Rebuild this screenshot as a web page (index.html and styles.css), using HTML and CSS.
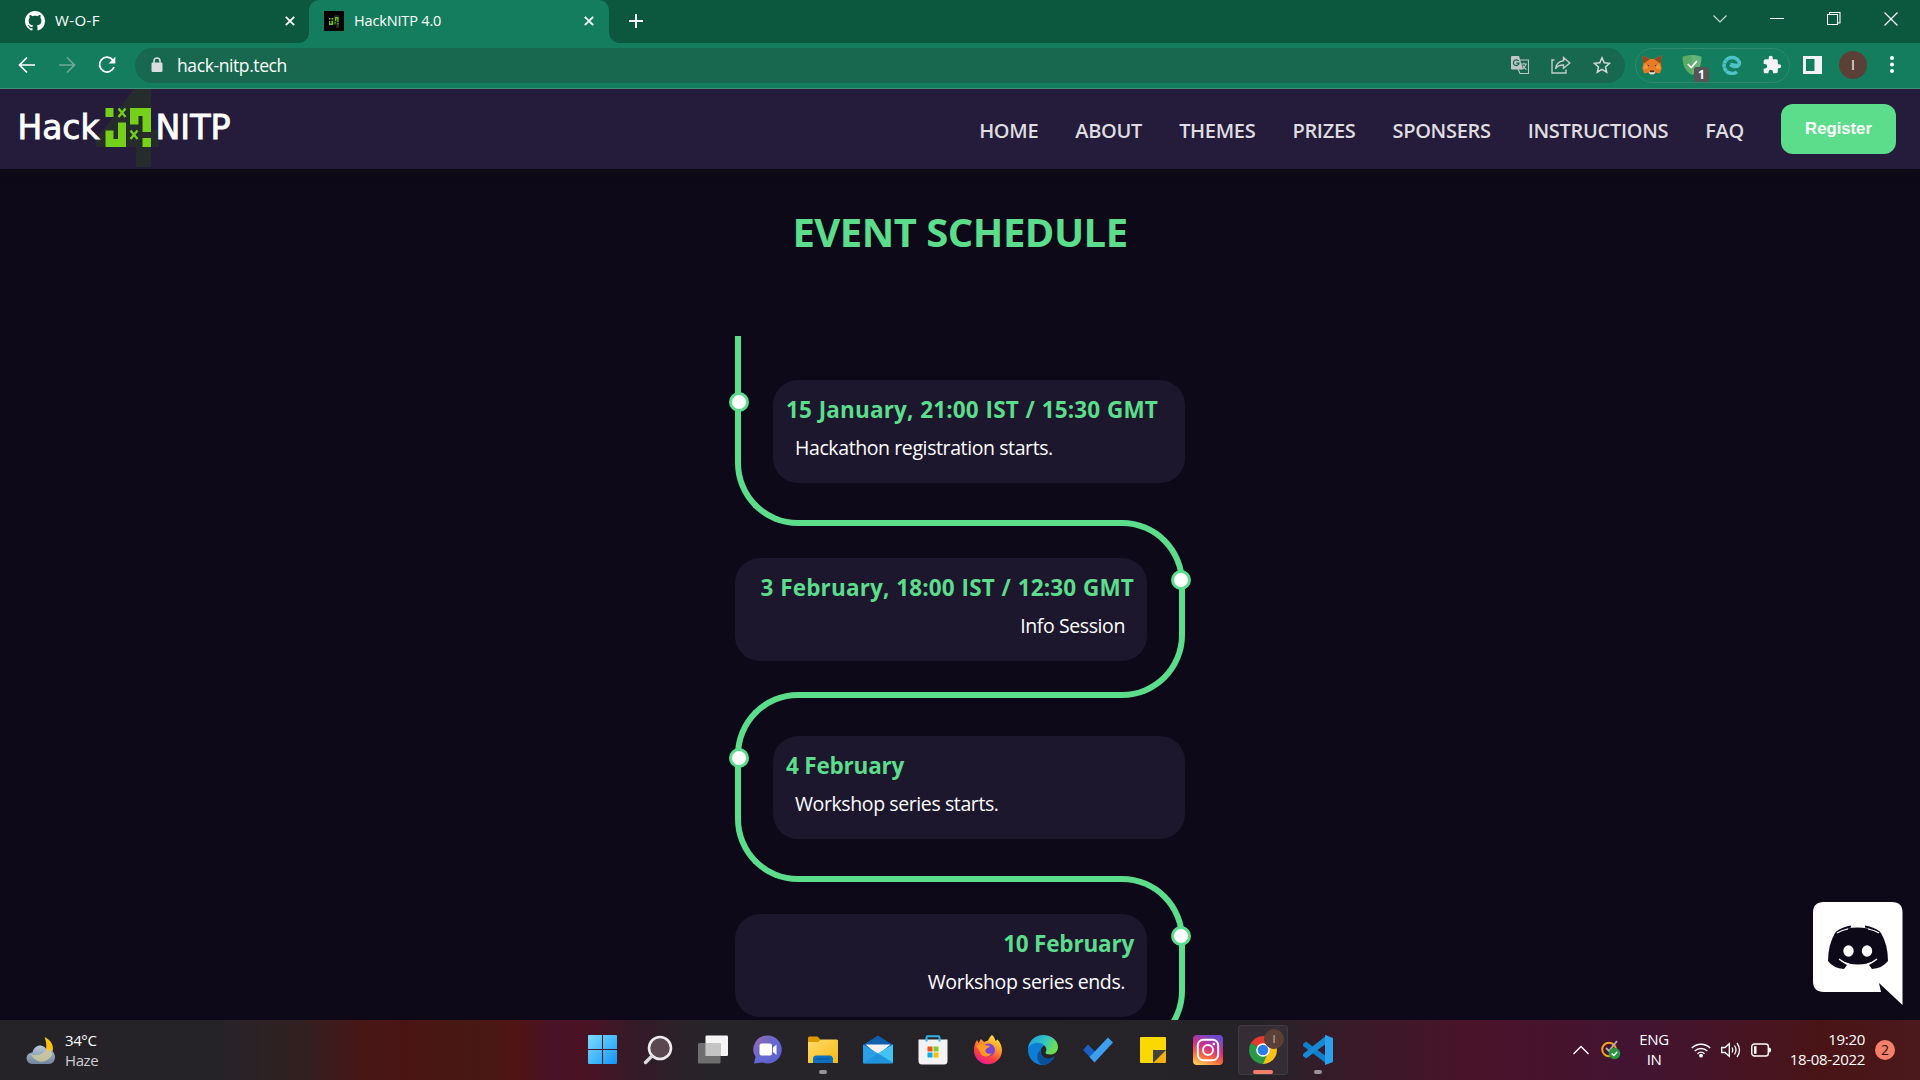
FILE: index.html
```html
<!DOCTYPE html>
<html lang="en">
<head>
<meta charset="utf-8">
<title>HackNITP 4.0</title>
<link rel="stylesheet" href="styles.css">
</head>
<body>
<div class="tabstrip">
  <div class="tab tab-idle">
    <svg class="favicon" width="20" height="20" viewBox="0 0 16 16"><path fill="#fff" d="M8 0C3.58 0 0 3.58 0 8c0 3.54 2.29 6.53 5.47 7.59.4.07.55-.17.55-.38 0-.19-.01-.82-.01-1.49-2.01.37-2.53-.49-2.69-.94-.09-.23-.48-.94-.82-1.13-.28-.15-.68-.52-.01-.53.63-.01 1.08.58 1.23.82.72 1.21 1.87.87 2.33.66.07-.52.28-.87.51-1.07-1.78-.2-3.64-.89-3.64-3.95 0-.87.31-1.59.82-2.15-.08-.2-.36-1.02.08-2.12 0 0 .67-.21 2.2.82.64-.18 1.32-.27 2-.27s1.36.09 2 .27c1.53-1.04 2.2-.82 2.2-.82.44 1.1.16 1.92.08 2.12.51.56.82 1.27.82 2.15 0 3.07-1.87 3.75-3.65 3.95.29.25.54.73.54 1.48 0 1.07-.01 1.93-.01 2.2 0 .21.15.46.55.38A8.01 8.01 0 0016 8c0-4.42-3.58-8-8-8z"/></svg>
    <span class="tab-title wide">W-O-F</span>
    <svg width="10" height="10" viewBox="0 0 10 10"><path d="M.8.8l8.4 8.4M9.2.8L.8 9.200" stroke="#fff" stroke-width="1.800"/></svg>
  </div>
  <div class="tab tab-active">
    <svg class="favicon" width="20" height="20" viewBox="0 0 20 20"><path fill="#000" d="M0 0h20v20H0z"/><path fill="#20281c" d="M11 4h4v13h-3v-3H5v-2z"/><path fill="#6cc518" d="M5 7h1.500v1.500H5zM7.500 7H9v1.500H7.500zM11 6h3.500v5h-1.200V7.500h-1V10H11zM5 10h1v2.500h1.500V10H9v4H5zM10.500 11h1.200v1.500h-1.200zM13.300 12h1.200v1.500h-1.200z"/></svg>
    <span class="tab-title">HackNITP 4.0</span>
    <svg width="10" height="10" viewBox="0 0 10 10"><path d="M.8.8l8.400 8.400M9.200.8L.8 9.200" stroke="#fff" stroke-width="1.800"/></svg>
  </div>
  <svg class="newtab" width="16" height="16" viewBox="0 0 16 16"><path d="M8 1v14M1 8h14" stroke="#fff" stroke-width="2"/></svg>
  <div class="window-buttons">
    <svg width="14" height="14" viewBox="0 0 14 14"><path d="M.5 3.500L7 10l6.500-6.500" fill="none" stroke="#cfe0d8" stroke-width="1.100"/></svg>
    <svg width="14" height="14" viewBox="0 0 14 14"><path d="M0 6.500h14" stroke="#fff"/></svg>
    <svg width="14" height="14" viewBox="0 0 14 14"><path d="M.5 2.500h10v10H.5zM2.500 2.500V.5h10.500v10.500h-2.500" fill="none" stroke="#fff" stroke-width="1.100"/></svg>
    <svg width="14" height="14" viewBox="0 0 14 14"><path d="M.5.5l13 13M13.500.5l-13 13" stroke="#fff" stroke-width="1.200"/></svg>
  </div>
</div>

<div class="toolbar">
  <div class="nav-buttons">
    <svg width="18" height="18" viewBox="0 0 18 18"><path d="M17 9H2M9 1.500L1.500 9 9 16.500" fill="none" stroke="#fff" stroke-width="1.700"/></svg>
    <svg width="18" height="18" viewBox="0 0 18 18"><path d="M1 9h15M9 1.500L16.500 9 9 16.500" fill="none" stroke="#70aa96" stroke-width="1.700"/></svg>
    <svg width="18" height="18" viewBox="0 0 18 18"><path d="M14.800 4A7.400 7.400 0 1 0 16 11" fill="none" stroke="#fff" stroke-width="1.800"/><path fill="#fff" d="M17.300.8v6.700h-6.700z"/></svg>
  </div>
  <div class="omnibox">
    <svg width="12" height="16" viewBox="0 0 12 16"><rect x=".5" y="5.500" width="11" height="9.500" rx="1.300" fill="#dadde0"/><path d="M3 6V4a3 3 0 0 1 6 0v2" fill="none" stroke="#dadde0" stroke-width="1.500"/></svg>
    <span class="url">hack-nitp.tech</span>
    <div class="omnibox-actions">
      <svg width="18" height="18" viewBox="0 0 18 18"><path fill="none" stroke="#bfc6c3" stroke-width="1.100" d="M8 4h9.500v13.500H9L7 13"/><path fill="#bfc6c3" d="M1 0h7l4 13.500H1a1 1 0 0 1-1-1V1a1 1 0 0 1 1-1z"/><path d="M7.600 5.200A2.800 2.800 0 1 0 8 7.200H5.300" fill="none" stroke="#17684f" stroke-width="1.300"/><path d="M10 8h6M13 6.700V8M15 8c-.5 2.500-2.200 4-3.500 5M11.700 9.500c.8 1.700 2.300 3 3.700 4" fill="none" stroke="#bfc6c3" stroke-width="1.100"/></svg>
      <svg width="20" height="18" viewBox="0 0 20 18"><path d="M3.500 4H1v13h14v-3.500" fill="none" stroke="#c4cbc8" stroke-width="1.400"/><path d="M12.500 1.500L18.800 7l-6.300 5.300V9C8.500 9 6 10.200 4.500 12.800 5 8.500 7.500 5.300 12.500 4.700z" fill="none" stroke="#c4cbc8" stroke-width="1.400"/></svg>
      <svg width="18" height="18" viewBox="0 0 18 18"><path d="M9 1.800l2.200 5 5.400.5-4.100 3.600 1.200 5.300L9 13.400l-4.700 2.800 1.200-5.300-4.100-3.600 5.400-.5z" fill="none" stroke="#d5dad8" stroke-width="1.500"/></svg>
    </div>
  </div>
  <div class="extensions">
    <svg width="20" height="20" viewBox="0 0 20 20"><path fill="#e87b25" d="M.5.5L8 4h4L19.500.5l-.8 8 1 5-2 5-4-1-1.700 1.800H8L6.300 17.500l-4 1-2-5 1-5z"/><path fill="#93481f" d="M.5.5L8 4 3 7.500l-1.700 1zM19.500.5L12 4l5 3.500 1.700 1z"/><path fill="#f79a38" d="M7 10.500l-1.500 3-4 .5 1.500-5zM13 10.500l1.500 3 4 .5-1.500-5z"/><path fill="#332b2b" d="M5 9.500l2.500 1-1 1zM15 9.500l-2.500 1 1 1zM8 15.500h4v2H8z"/><path fill="#ddd" d="M6.500 16.500l1.500.8h4l1.500-.8L12 19.300H8z"/></svg>
    <div class="shield">
      <svg width="20" height="20" viewBox="0 0 20 20"><path fill="#67b279" d="M10 0c3 0 6.500.6 9.500 1.700 0 7-1.500 13.600-9.500 18.300z"/><path fill="#5bab66" d="M10 0C7 0 3.500.6.5 1.700.5 8.700 2 15.300 10 20z"/><path d="M5.800 9l3.400 3.500L15 6" fill="none" stroke="#fff" stroke-width="1.700"/></svg>
      <span class="badge">1</span>
    </div>
    <svg width="20" height="20" viewBox="0 0 20 20"><path d="M15 16.800A8 8 0 1 1 17.300 7c.5 2.800-1.300 4.300-4 4.300-2 0-3.800-.5-5-1.600" fill="none" stroke="#4dc3c8" stroke-width="3.600"/><path fill="#4dc3c8" d="M8 7.500L18 9.500l-2 3.500-5 .2z"/><path d="M2 4l3 2M.8 8l3 .8M1 12.500l3-.5M3.500 16.500L6 14.300" stroke="#2d9a90" stroke-width=".8"/></svg>
    <svg width="20" height="20" viewBox="0 0 24 24"><path fill="#f1f3f4" d="M20.500 11H19V7a2 2 0 0 0-2-2h-4V3.500a2.500 2.500 0 0 0-5 0V5H4a2 2 0 0 0-2 2v3.800h1.500a2.700 2.700 0 0 1 0 5.400H2V20a2 2 0 0 0 2 2h3.800v-1.500a2.700 2.700 0 0 1 5.400 0V22H17a2 2 0 0 0 2-2v-4h1.500a2.500 2.500 0 0 0 0-5z"/></svg>
  </div>
  <svg class="panel-icon" width="19" height="18" viewBox="0 0 19 18"><path fill="#f1f3f4" d="M0 0h19v18H0z"/><path fill="#147d5d" d="M3 3h8.500v12H3z"/></svg>
  <span class="avatar">I</span>
  <svg class="menu-icon" width="4" height="17" viewBox="0 0 4 17"><circle cx="2" cy="2" r="2" fill="#fff"/><circle cx="2" cy="8.500" r="2" fill="#fff"/><circle cx="2" cy="15" r="2" fill="#fff"/></svg>
</div>

<div class="page">
  <header class="site-header">
    <svg class="logo" width="240" height="79" viewBox="0 0 240 79">
      <path fill="#262b2c" d="M134 0h17v41h8v17h-8v20h-15V58H96V51z"/>
      <g fill="#74d018"><path d="M105.500 19h8v9h-8zM130 19h21v24h-8.500V27h-4v8.500H130zM118 33.500h8V58h-20.500V41.500h8V50h4.500zM142.500 49h8.500v9h-8.500z"/></g>
      <path d="M118.500 19.500l7 8.500M125.500 19.500l-7 8.500M130.500 41.500l7 8.500M137.500 41.500l-7 8.500" stroke="#74d018" stroke-width="2.300"/>
      <g class="logo-text"><text x="17.500" y="49.500" textLength="82" lengthAdjust="spacingAndGlyphs">Hack</text><text x="155.500" y="49.500" textLength="75" lengthAdjust="spacingAndGlyphs">NITP</text></g>
    </svg>
    <nav class="site-nav">
      <a>HOME</a><a>ABOUT</a><a>THEMES</a><a>PRIZES</a><a>SPONSERS</a><a>INSTRUCTIONS</a><a>FAQ</a>
      <button class="register">Register</button>
    </nav>
  </header>
  <main class="schedule">
    <h1>EVENT SCHEDULE</h1>
    <div class="timeline">
      <section class="item left first"><i class="rail"></i><b class="dot"></b><div class="card"><h2 class="spaced">15 January, 21:00 IST / 15:30 GMT</h2><p>Hackathon registration starts.</p></div></section>
      <section class="item right"><i class="rail"></i><b class="dot"></b><div class="card"><h2 class="spaced">3 February, 18:00 IST / 12:30 GMT</h2><p>Info Session</p></div></section>
      <section class="item left"><i class="rail"></i><b class="dot"></b><div class="card"><h2>4 February</h2><p>Workshop series starts.</p></div></section>
      <section class="item right"><i class="rail"></i><b class="dot"></b><div class="card"><h2>10 February</h2><p>Workshop series ends.</p></div></section>
    </div>
  </main>
  <svg class="discord" width="90" height="104" viewBox="0 0 90 104">
    <path fill="#fff" d="M11 0h68q10.500 0 10.500 10.500V103L66 81l2 9H11Q0 90 0 79V10.500Q0 0 11 0z"/>
    <path fill="#0e0919" d="M22 31q4-4 12-4.500 10-2 21 0 8 .5 13 4.500 7 12 7 28-6 7.500-16 8l-3-4 8-5q-19 9-38 0l8 5-3 4q-11-1-16-8 0-16 7-28z"/>
    <path d="M23 31q6-5 15-6.500M67 31q-6-5-15-6.500" fill="none" stroke="#0e0919" stroke-width="1.800"/>
    <path d="M24 31q5-3 11-4M66 31q-5-3-11-4M26 57q5 4 10 5M64 57q-5 4-10 5" fill="none" stroke="#fff" stroke-width="1.200"/>
    <ellipse cx="35.500" cy="49" rx="5.200" ry="5.800" fill="#fff"/><ellipse cx="54" cy="49" rx="5.200" ry="5.800" fill="#fff"/>
  </svg>
</div>

<footer class="taskbar">
  <div class="weather">
    <svg width="30" height="30" viewBox="0 0 30 30"><defs><linearGradient id="cl" x2="0" y2="1"><stop stop-color="#b9c9dc"/><stop offset="1" stop-color="#71859c"/></linearGradient></defs><path fill="#ffc20e" d="M18.500 1c9 4 10.500 12 6 20h-7c3-5 4-13 1-20z"/><path fill="url(#cl)" d="M6 28a5.600 5.600 0 0 1 .5-11.500C7.500 11 12 9 15 9.500c3 .5 5 2.500 6 5 5-1 8 2.500 8 6.500 0 4-2.500 7-6 7z"/><path fill="#d2cc9a" opacity=".8" d="M5 18c5 3 12 0 15-4 4-.5 6 2 6 5-4 8-16 10-21-1z"/></svg>
    <div class="two-lines"><span>34°C</span><span class="dim">Haze</span></div>
  </div>
  <div class="apps">
    <span class="app"><svg width="30" height="30" viewBox="0 0 30 30"><defs><linearGradient id="win" x2="1" y2="1"><stop stop-color="#7fdcff"/><stop offset="1" stop-color="#1196f5"/></linearGradient></defs><path fill="url(#win)" d="M0 1q0-1 1-1h13v14H0zM15 0h13q1 0 1 1v13H15zM0 15h14v14H1q-1 0-1-1zM15 15h14v13q0 1-1 1H15z"/></svg></span>
    <span class="app"><svg width="30" height="30" viewBox="0 0 30 30"><circle cx="17" cy="13" r="11" fill="#5b4750" stroke="#eceaea" stroke-width="2.600"/><path d="M9 21l-6.500 6.500" stroke="#dcdada" stroke-width="3.400" stroke-linecap="round"/></svg></span>
    <span class="app"><svg width="30" height="30" viewBox="0 0 30 30"><rect x="7.500" y=".5" width="22.500" height="20.500" rx="1.200" fill="#f4f4f4"/><rect x="0" y="8" width="22.500" height="20.500" rx="1.200" fill="#7b7b7b" opacity=".85"/><path fill="#c4c4c4" d="M7.500 8h15v13h-15z"/></svg></span>
    <span class="app"><svg width="30" height="30" viewBox="0 0 30 30"><defs><linearGradient id="chat" x2="1" y2="1"><stop stop-color="#9a69ae"/><stop offset=".5" stop-color="#6468d0"/><stop offset="1" stop-color="#5a5ed0"/></linearGradient></defs><path fill="url(#chat)" d="M14.500.5a14 14 0 1 1-5 27L1 28.500 2.500 22a14 14 0 0 1 12-21.500z"/><rect x="6.500" y="8.500" width="12.500" height="12" rx="2" fill="#fff"/><path fill="#fff" d="M20 12.500l3.500-3v10.500l-3.500-3z"/></svg></span>
    <span class="app open"><svg width="30" height="30" viewBox="0 0 30 30"><defs><linearGradient id="fo" x2="1" y2="1"><stop stop-color="#ffdc69"/><stop offset="1" stop-color="#f9b916"/></linearGradient></defs><path fill="#dd9900" d="M0 3q0-1.500 1.500-1.500h8L13 5h17v5H0z"/><path fill="url(#fo)" d="M0 7h10l3-2.500h15.500Q30 4.500 30 6v22H0z"/><path fill="#0d6fc0" d="M5 28v-4q0-3.500 3.500-3.500h13Q25 20.500 25 24v4z"/><path d="M8.500 24h13" stroke="#0a4e90" stroke-width="1"/></svg></span>
    <span class="app"><svg width="30" height="30" viewBox="0 0 30 30"><path fill="#0e5fae" d="M0 10L15 .5 30 10v5H0z"/><path fill="#f2f2f2" d="M2.500 9.500h25L15 20z"/><path fill="#2a9fe5" d="M0 9.500L15 18.500 30 9.500V27.500q0 1-1 1H1q-1 0-1-1z"/><path fill="#42c3f2" d="M30 9.500V27.500L15 18.500z"/><path fill="#1e8ddc" d="M0 28.500L30 28 15 18.500z" opacity=".7"/></svg></span>
    <span class="app"><svg width="30" height="30" viewBox="0 0 30 30"><path d="M8.500 6V2.500q0-1.200 1.200-1.200h10.600q1.200 0 1.200 1.200V6" fill="none" stroke="#2fb4ea" stroke-width="2"/><path fill="#f3f3f3" d="M.5 4.500h29V26q0 3.500-3.500 3.500H4Q.5 29.500.5 26z"/><path d="M8.500 6.500V4M21.500 6.500V4" stroke="#2fb4ea" stroke-width="2"/><path fill="#f1511b" d="M9.500 11.500h5v5h-5z"/><path fill="#80cc28" d="M15.500 11.500h5v5h-5z"/><path fill="#00adef" d="M9.500 17.500h5v5h-5z"/><path fill="#fbbc09" d="M15.500 17.500h5v5h-5z"/></svg></span>
    <span class="app"><svg width="30" height="30" viewBox="0 0 30 30"><defs><linearGradient id="ff" x1=".8" y1="0" x2=".3" y2="1"><stop stop-color="#fff04a"/><stop offset=".35" stop-color="#ffa22a"/><stop offset=".7" stop-color="#ff4040"/><stop offset="1" stop-color="#e6189b"/></linearGradient></defs><path fill="url(#ff)" d="M19 0c2 1.500 3 4 3.500 6l2-1.500c3 3 4.500 7 4.500 11A14 14 0 1 1 1 15c0-4 1-7 3-10l1.500 3 2.500-4 3 3 4-1.500C16 3.500 17 1.500 19 0z"/><circle cx="15.500" cy="15" r="6.500" fill="#7b43d6"/><path fill="#ff9c25" d="M3 11c4-2 6-2 8-1l6 1c-1 2-4 2-4.500 4.500-.5 2 2.500 4 6 3-2 4-9 4-11 0-1.500-3-2-6-4.500-7.500z"/></svg></span>
    <span class="app"><svg width="30" height="30" viewBox="0 0 30 30"><defs><linearGradient id="eg" x2="1" y2=".4"><stop stop-color="#1b9ae0"/><stop offset=".6" stop-color="#35c4c0"/><stop offset="1" stop-color="#6de04e"/></linearGradient></defs><path fill="#0b7fd6" d="M0 15C0 7 5 3 11 4l7 6c-4 1-6 4-5 8 1 5 6 7 12 6-3 4-7 6-11 6C6 29.500 0 23 0 15z"/><path fill="#0d4f98" d="M12.500 15c-1 5 3 9 8 8.500 3-.3 5-1.500 6.500-2.500-2 5.500-7 9-12 9-6-2-8-11-2.500-15z"/><path fill="url(#eg)" d="M.2 13C1.500 5 7.500 0 15 0c9 0 15 6 15 12 0 5-4 7.500-8 7.500-3 0-5-1-4.500-2 1.500-2 1-5.500-1.500-7.500C11 6 3 8 .2 13z"/></svg></span>
    <span class="app"><svg width="30" height="30" viewBox="0 0 30 30"><path fill="#1c5fc4" d="M0 15l5-5.500 12 12-5.500 5.500z"/><path fill="#3d9fee" d="M6.500 22L25 2.500l5 5L11.500 27.500z"/></svg></span>
    <span class="app"><svg width="30" height="30" viewBox="0 0 30 30"><path fill="#fbd800" d="M2 3q0-1 1-1h24q1 0 1 1v12H15v13H3q-1 0-1-1z"/><path fill="#45423c" d="M15 15h13L15 28z"/><path fill="#f3b010" d="M28 15v12q0 1-1 1H15z"/></svg></span>
    <span class="app"><svg width="30" height="30" viewBox="0 0 30 30"><defs><linearGradient id="ig" x1=".2" y1="1" x2=".6" y2="0"><stop stop-color="#ffcf5c"/><stop offset=".3" stop-color="#fa6a3c"/><stop offset=".6" stop-color="#d62d84"/><stop offset="1" stop-color="#6b4bcf"/></linearGradient></defs><rect width="30" height="30" rx="4" fill="url(#ig)"/><rect x="4.800" y="4.800" width="20.400" height="20.400" rx="5.500" fill="none" stroke="#fff" stroke-width="2"/><circle cx="15" cy="15" r="5" fill="none" stroke="#fff" stroke-width="2"/><circle cx="20.800" cy="9" r="1.300" fill="#fff"/></svg></span>
    <span class="app current"><svg width="30" height="30" viewBox="0 0 30 30"><path fill="#e33b2e" d="M15 15L2.900 8A14 14 0 0 1 27.100 8z"/><path fill="#fbc116" d="M15 15l12.100-7A14 14 0 0 1 15 29z"/><path fill="#2a9a49" d="M15 15v0l5 3-5 11A14 14 0 0 1 2.900 8z"/><circle cx="15" cy="15" r="6.800" fill="#fff"/><circle cx="15" cy="15" r="5.300" fill="#2b7de9"/></svg><span class="app-badge">I</span></span>
    <span class="app open"><svg width="30" height="30" viewBox="0 0 30 30"><path fill="#0f7fc9" d="M0 9l3-2.500L24 22v7L0 11z"/><path fill="#1788d4" d="M0 21l3 2.500L24 8V0L0 19z"/><path fill="#2ba1ee" d="M22 0l8 3v24l-8 3z"/></svg></span>
  </div>
  <div class="tray">
    <svg width="16" height="10" viewBox="0 0 16 10"><path d="M.5 9L8 1.500 15.500 9" fill="none" stroke="#fff" stroke-width="1.300"/></svg>
    <svg class="av" width="20" height="20" viewBox="0 0 20 20"><circle cx="8" cy="9.500" r="6.800" fill="none" stroke="#eda51f" stroke-width="2"/><path d="M5 8l3 3L16 1" fill="none" stroke="#b9a8a8" stroke-width="2"/><circle cx="13.500" cy="13.500" r="5.800" fill="#27963c"/><path d="M10.700 13.500l2.200 2 3.400-3.800" fill="none" stroke="#fff" stroke-width="1.500"/></svg>
    <div class="two-lines lang"><span>ENG</span><span>IN</span></div>
    <svg class="wifi" width="20" height="16" viewBox="0 0 20 16"><path d="M.8 6a13 13 0 0 1 18.400 0M3.700 9a9 9 0 0 1 12.600 0M6.500 11.700a5 5 0 0 1 7 0" fill="none" stroke="#fff" stroke-width="1.400"/><circle cx="10" cy="13.700" r="1.900" fill="#fff"/></svg>
    <svg class="sound" width="20" height="18" viewBox="0 0 20 18"><path d="M.7 6.500H4L8.300 2.700v12.600L4 11.500H.7zM11 6.500q1.500 2.500 0 5M13.500 4.500q3 4.500 0 9M16 2q5 7 0 14" fill="none" stroke="#fff" stroke-width="1.300"/></svg>
    <svg class="battery" width="21" height="14" viewBox="0 0 21 14"><rect x=".8" y="1" width="16.500" height="12" rx="2.500" fill="none" stroke="#fff" stroke-width="1.400"/><path fill="#fff" d="M3 3.300h2.500v7.400H3zM18 4.500q2.200 0 2.200 2.500T18 9.500z"/></svg>
    <div class="two-lines clock"><span>19:20</span><span>18-08-2022</span></div>
    <span class="count">2</span>
  </div>
</footer>
</body>
</html>
```
FILE: styles.css
```css
* { box-sizing: border-box; margin: 0; padding: 0; }
body { width: 1920px; height: 1080px; overflow: hidden; display: flex; flex-direction: column; background: #0e0919; font-family: "Open Sans", "Noto Sans", sans-serif; color: #fff; }
svg { display: block; flex: none; }

/* Browser tabs */
.tabstrip { height: 43px; flex: none; display: flex; align-items: flex-start; background: #0b583f; }
.tab { height: 43px; display: flex; align-items: center; padding-bottom: 1px; }
.tab-idle { width: 309px; padding-left: 25px; padding-right: 14px; }
.tab-active { width: 300px; padding-left: 15px; padding-right: 15px; background: #147d5d; border-radius: 10px 10px 0 0; position: relative; }
.tab-active::before, .tab-active::after { content: ""; position: absolute; bottom: 0; width: 10px; height: 10px; }
.tab-active::before { left: -10px; background: radial-gradient(circle at 0 0, transparent 9.500px, #147d5d 10px); }
.tab-active::after { right: -10px; background: radial-gradient(circle at 100% 0, transparent 9.500px, #147d5d 10px); }
.tab-title { flex: 1; margin-left: 10px; padding-bottom: 2px; font-size: 14.500px; letter-spacing: -0.160px; }
.tab-title.wide { font-size: 15px; letter-spacing: 0.400px; }
.newtab { margin: 13px 0 0 19px; }
.window-buttons { margin: 12px 22px 0 auto; display: flex; gap: 43px; }

/* Address bar */
.toolbar { height: 46px; flex: none; display: flex; align-items: center; background: #147d5d; border-bottom: 1px solid #3f9079; padding-bottom: 2px; }
.nav-buttons { width: 135px; padding-left: 18px; display: flex; gap: 22px; }
.omnibox { width: 1490px; height: 35px; border-radius: 18px; margin-top: 1px; background: #17684f; display: flex; align-items: center; padding: 0 14px 0 16px; }
.url { margin-left: 14px; font-size: 17.500px; letter-spacing: -0.400px; line-height: 24px; }
.omnibox-actions { margin-left: auto; display: flex; gap: 22px; }
.extensions { width: 155px; height: 35px; margin: 1px 0 0 10px; border: 1px solid #31896c; border-radius: 18px; display: flex; align-items: center; gap: 20px; padding-left: 6px; }
.shield { position: relative; }
.badge { position: absolute; left: 12px; top: 12px; width: 15px; height: 15px; border-radius: 2px; background: #555; font-weight: 700; font-size: 12px; line-height: 16px; text-align: center; }
.panel-icon { margin-left: 13px; }
.avatar { width: 28px; height: 28px; margin-left: 17px; border-radius: 50%; background: #5b4037; font-size: 14px; line-height: 28px; text-align: center; }
.menu-icon { margin-left: 23px; }

/* Site */
.page { height: 931px; flex: none; overflow: hidden; position: relative; }
.site-header { height: 80px; padding-right: 24px; display: flex; align-items: center; justify-content: space-between; background: #241c3a; box-shadow: 0 0 10px #101010; position: relative; }
.logo { align-self: flex-start; }
.logo-text { font: 33px "DejaVu Sans", sans-serif; fill: #fff; stroke: #fff; stroke-width: 0.900; }
.site-nav { display: flex; align-items: center; gap: 37px; font-size: 20px; font-weight: 600; letter-spacing: -0.300px; color: #dfdde0; line-height: 27px; }
.site-nav a { padding-top: 3px; }
.register { width: 115px; height: 50px; border: 0; border-radius: 12px; background: #5bdd8b; color: #fff; font: 700 16.700px "Liberation Sans", Arial, sans-serif; padding-bottom: 1px; }
.schedule { display: flex; flex-direction: column; align-items: center; }
h1 { height: 167px; padding-top: 35px; font-size: 40px; line-height: 56px; letter-spacing: -0.500px; color: #5bdd8b; }
.timeline { width: 450px; }
.item { display: grid; height: 178px; margin-bottom: -6px; position: relative; }
.item > .rail, .item > .card { grid-area: 1 / 1; }
.item.left { height: 190px; }
.rail { width: 225px; border: 6px solid #5bdd8b; }
.left .rail { border-right: 0; border-radius: 63px 0 0 63px; }
.right .rail { border-left: 0; border-radius: 0 63px 63px 0; justify-self: end; }
.first .rail { border-top: 0; border-top-left-radius: 0; }
.dot { position: absolute; width: 20px; height: 20px; border: 3px solid #5bdd8b; border-radius: 50%; background: #fff; }
.left .dot { left: -6px; top: 56px; }
.right .dot { right: -6px; top: 50px; }
.card { width: 412px; height: 103px; border-radius: 25px; background: #1d172e; padding: 14px 13px 0; }
.left .card { margin-top: 44px; justify-self: end; }
.right .card { margin-top: 38px; text-align: right; }
h2 { font-size: 22.500px; line-height: 32px; letter-spacing: -0.200px; color: #5bdd8b; white-space: nowrap; }
h2.spaced { letter-spacing: 0.150px; word-spacing: 0.700px; }
.card p { padding: 8px 9px 0; font-size: 19.500px; line-height: 28px; letter-spacing: -0.400px; }
.discord { position: absolute; left: 1813px; top: 813px; }

/* Windows taskbar */
.taskbar { height: 60px; flex: none; display: flex; background: linear-gradient(90deg, #252228 0, #262328 220px, #322020 300px, #481515 365px, #4b1414 410px, #461913 470px, #501415 518px, #491226 552px, #4c1224 580px, #331b28 640px, #272429 700px, #262328 1265px, #361b28 1330px, #4a132a 1480px, #421432 1640px, #461423 1740px, #4a1416 1820px, #4b181b 1920px); }
.weather { width: 578px; padding: 16px 0 0 26px; display: flex; gap: 9px; }
.two-lines { display: flex; flex-direction: column; font-size: 15px; line-height: 20px; letter-spacing: -0.400px; }
.weather .two-lines { margin-top: -6px; }
.dim { color: #cfcdd0; }
.apps { display: flex; gap: 5px; padding-top: 5px; }
.app { width: 50px; height: 50px; padding: 10px; position: relative; border-radius: 4px; }
.current { background: #352d35; box-shadow: inset 0 0 0 1px #413a42; }
.open::after, .current::after { content: ""; position: absolute; bottom: 1px; left: 21px; width: 8px; height: 4px; border-radius: 2px; background: #9a949a; }
.current::after { left: 15px; width: 20px; background: #f4806a; }
.app-badge { position: absolute; left: 26px; top: 4px; width: 20px; height: 20px; border-radius: 50%; background: #5b4037; color: #c8bdb9; font-size: 11px; line-height: 20px; text-align: center; }
.tray { flex: 1; display: flex; align-items: center; padding-left: 230px; }
.av { margin-left: 12px; }
.lang { width: 50px; margin-left: 8px; align-items: center; }
.tray .two-lines { height: 42px; }
.wifi { margin-left: 12px; margin-top: -1px; }
.sound { margin-left: 10px; }
.battery { margin-left: 10px; }
.clock { width: 93px; align-items: flex-end; letter-spacing: -0.300px; }
.count { width: 20px; height: 20px; margin-left: 10px; border-radius: 50%; background: #f4806a; color: #2b1010; font-size: 14px; line-height: 20px; text-align: center; }
```
